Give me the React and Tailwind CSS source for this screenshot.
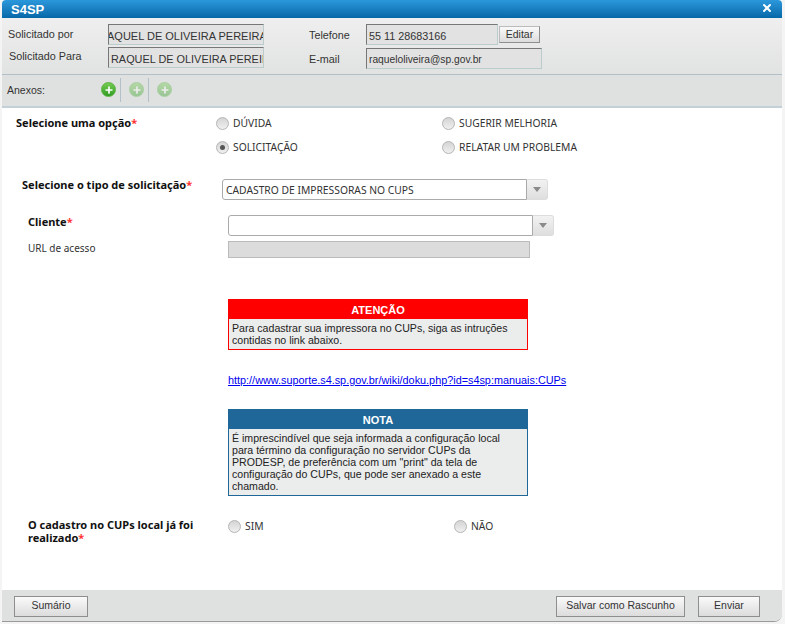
import { X, Plus } from 'lucide-react';

const Radio = ({ checked, label, className = '' }) => (
  <label className={`flex items-center gap-[4px] ${className}`}>
    <span className="flex h-[13px] w-[13px] items-center justify-center rounded-full border border-[#b5b5b5] bg-gradient-to-b from-[#d4d4d4] to-[#f0f0f0]">
      {checked && <span className="h-[5px] w-[5px] rounded-full bg-[#555]" />}
    </span>
    <span className="pt-[1px] text-[10.3px] text-[#333]">{label}</span>
  </label>
);

const Req = () => <span className="text-[#f33]">*</span>;

const AddIcon = ({ faded }) => (
  <span className={`flex h-[15px] w-[15px] items-center justify-center rounded-full border border-[#56b23c] bg-gradient-to-b from-[#74cc50] to-[#2f9c24] ${faded ? 'opacity-40' : ''}`}>
    <Plus size={10} strokeWidth={4} color="#fff" />
  </span>
);

const Combo = ({ value, className }) => (
  <div className={`flex h-[21px] ${className}`}>
    <div className="flex-1 truncate rounded-l-[3px] border border-[#aaa] bg-white pl-[3px] text-[10.3px] leading-[20px] text-[#333]">
      {value}
    </div>
    <div className="flex w-[21px] items-center justify-center rounded-r-[3px] border border-l-0 border-[#ddd] bg-gradient-to-b from-[#f2f2f2] to-[#dedede]">
      <span className="h-0 w-0 border-x-[4px] border-t-[5px] border-x-transparent border-t-[#8a8a8a]" />
    </div>
  </div>
);

const Field = ({ children, className }) => (
  <div className={`h-[21px] overflow-hidden whitespace-nowrap border border-t-[#777] border-l-[#777] border-r-[#bcc] border-b-[#bcc] bg-[#e2e2e2] leading-[22px] text-[#333] ${className}`}>
    {children}
  </div>
);

const Button = ({ children, className }) => (
  <button className={`border border-[#8e8e8e] bg-gradient-to-b from-[#fafafa] to-[#dcdcdc] text-[10.5px] text-[#333] ${className}`}>
    {children}
  </button>
);

const Notice = ({ title, color, border, className, children }) => (
  <div className={`ml-[226px] w-[300px] border ${border} bg-[#ebecec] font-['Liberation_Sans',sans-serif] ${className}`}>
    <div className={`h-[19px] text-center text-[11px] font-bold leading-[20px] text-white ${color}`}>{title}</div>
    <div className="px-[3px] pt-[3px] pb-[3px] text-[10.6px] leading-[12px] text-[#222]">{children}</div>
  </div>
);

export default function App() {
  return (
    <div className="h-[624px] w-[785px] overflow-hidden bg-[#f4f4f4] font-['Liberation_Sans',sans-serif]">
      <div className="ml-[2px] flex h-[622px] w-[780px] flex-col overflow-hidden rounded-t-[4px] rounded-br-[8px] border-b border-[#9a9a9a] bg-white">
        {/* Title bar */}
        <div className="flex h-[18px] items-center justify-between bg-gradient-to-b from-[#2b98dc] to-[#0468a8] pl-[9px] pr-[9px]">
          <span className="text-[13px] font-bold leading-[15px] text-white">S4SP</span>
          <X size={12} strokeWidth={4} color="#fff" className="mb-[2px]" />
        </div>

        {/* Requester data */}
        <div className="flex h-[57px] border-b border-[#b3c0ca] bg-gradient-to-b from-[#eeefee] to-[#e1e3e2] pt-[6px] text-[10.8px] text-[#333]">
          <div className="flex w-[106px] flex-col gap-[3px] pl-[6px]">
            <div className="h-[19px] leading-[20px]">Solicitado por</div>
            <div className="h-[21px] pl-[1px] leading-[20px]">Solicitado Para</div>
          </div>
          <div className="flex w-[201px] flex-col gap-[2px]">
            <Field className="w-[156px] text-[11px]"><span className="ml-[-2px]">AQUEL DE OLIVEIRA PEREIRA</span></Field>
            <Field className="w-[156px] pl-[2px] text-[10.9px]">RAQUEL DE OLIVEIRA PEREIRA</Field>
          </div>
          <div className="flex w-[57px] flex-col gap-[3px]">
            <div className="h-[21px] leading-[22px]">Telefone</div>
            <div className="h-[21px] leading-[22px]">E-mail</div>
          </div>
          <div className="flex flex-col gap-[3px]">
            <div className="flex gap-[1px]">
              <Field className="w-[132px] pl-[2px] text-[10.8px]">55 11 28683166</Field>
              <Button className="mt-[2px] h-[17px] w-[41px] !border-t-[#bbb] !border-l-[#bbb]">Editar</Button>
            </div>
            <Field className="w-[176px] pl-[2px] text-[10.25px]">raqueloliveira@sp.gov.br</Field>
          </div>
        </div>

        {/* Attachments */}
        <div className="flex h-[33px] items-center border-b-2 border-[#c4d0d8] bg-[#dfe1e0] pb-[2px] pl-[5px]">
          <span className="mt-[3px] w-[94px] text-[10.5px] text-[#333]">Anexos:</span>
          <AddIcon />
          <span className="ml-[4px] mr-[8px] h-[24px] w-px bg-[#b3c0ca]" />
          <AddIcon faded />
          <span className="ml-[4px] mr-[8px] h-[24px] w-px bg-[#b3c0ca]" />
          <AddIcon faded />
        </div>

        {/* Form */}
        <div className="flex-1 font-['Noto_Sans',sans-serif]">
          <div className="flex pl-[14px] pt-[7px]">
            <div className="w-[200px] text-[11px] font-bold leading-[16px] text-[#111]">Selecione uma opção<Req /></div>
            <div className="grid grid-cols-[226px_1fr] gap-y-[8px]">
              <Radio label="DÚVIDA" className="h-[16px]" />
              <Radio label="SUGERIR MELHORIA" className="h-[16px]" />
              <Radio checked label="SOLICITAÇÃO" className="h-[16px]" />
              <Radio label="RELATAR UM PROBLEMA" className="h-[16px]" />
            </div>
          </div>

          <div className="mt-[24px] flex pl-[20px]">
            <div className="w-[200px] text-[11px] font-bold leading-[12px] text-[#111]">Selecione o tipo de solicitação<Req /></div>
            <Combo value="CADASTRO DE IMPRESSORAS NO CUPS" className="w-[326px]" />
          </div>

          <div className="mt-[15px] flex pl-[26px]">
            <div className="w-[200px] text-[11px] font-bold leading-[14px] text-[#111]">Cliente<Req /></div>
            <Combo className="w-[326px]" />
          </div>

          <div className="mt-[5px] flex pl-[26px]">
            <div className="w-[200px] text-[10px] leading-[14px] text-[#333]">URL de acesso</div>
            <div className="h-[17px] w-[302px] border border-[#bbb] bg-[#dcdcdc]" />
          </div>

          <Notice title="ATENÇÃO" color="bg-[#f00]" border="border-[#f00]" className="mt-[41px]">
            Para cadastrar sua impressora no CUPs, siga as intruções contidas no link abaixo.
          </Notice>

          <div className="mt-[24px] ml-[226px] font-['Liberation_Sans',sans-serif] text-[10.85px] leading-[13px]">
            <a href="#" className="text-[#00e] underline">http://www.suporte.s4.sp.gov.br/wiki/doku.php?id=s4sp:manuais:CUPs</a>
          </div>

          <Notice title="NOTA" color="bg-[#1f6799]" border="border-[#1f6799]" className="mt-[22px]">
            É imprescindível que seja informada a configuração local para término da configuração no servidor CUPs da PRODESP, de preferência com um "print" da tela de configuração do CUPs, que pode ser anexado a este chamado.
          </Notice>

          <div className="mt-[22px] flex pl-[26px]">
            <div className="w-[200px] pr-[20px] text-[11px] font-bold leading-[13px] text-[#111]">O cadastro no CUPs local já foi realizado<Req /></div>
            <Radio label="SIM" className="h-[16px] w-[226px]" />
            <Radio label="NÃO" className="h-[16px]" />
          </div>
        </div>

        {/* Footer */}
        <div className="flex h-[31px] items-center justify-between bg-[#dfe1e0] px-[12px] pt-[1px]">
          <Button className="h-[21px] w-[74px]">Sumário</Button>
          <div className="flex gap-[13px] pr-[10px]">
            <Button className="h-[21px] w-[129px]">Salvar como Rascunho</Button>
            <Button className="h-[21px] w-[62px]">Enviar</Button>
          </div>
        </div>
      </div>
    </div>
  );
}
